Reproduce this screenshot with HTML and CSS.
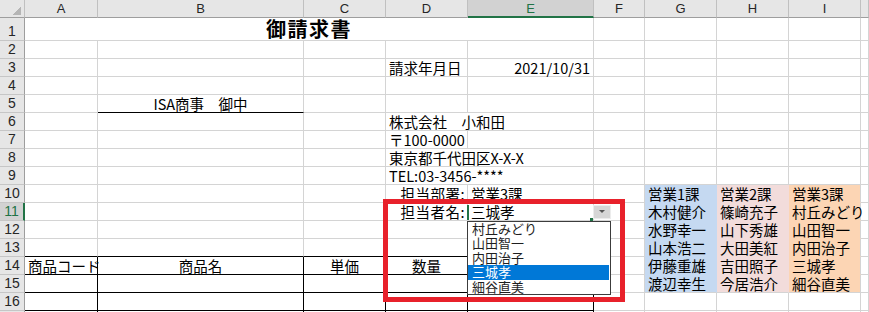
FILE: index.html
```html
<!DOCTYPE html>
<html>
  <head>
    <title>御請求書</title>
    <link rel="stylesheet" href="styles.css">
  </head>
  <body>
    <div class="sheet">
      <table class="grid">
        <colgroup>
          <col class="w-hd"><col class="w-a"><col class="w-b"><col class="w-c"><col class="w-d">
          <col class="w-e"><col class="w-f"><col class="w-g"><col class="w-h"><col class="w-i"><col class="w-j">
        </colgroup>
        <tr class="col-heads">
          <th class="corner"></th><th>A</th><th>B</th><th>C</th><th>D</th>
          <th class="active">E</th><th>F</th><th>G</th><th>H</th><th>I</th><th></th>
        </tr>
        <tr class="title-row">
          <th>1</th><td colspan="5" class="title">御請求書</td><td></td><td></td><td></td><td></td><td></td>
        </tr>
        <tr>
          <th>2</th><td></td><td></td><td></td><td></td><td></td><td></td><td></td><td></td><td></td><td></td>
        </tr>
        <tr>
          <th>3</th><td></td><td></td><td></td><td>請求年月日</td><td class="right">2021/10/31</td>
          <td></td><td></td><td></td><td></td><td></td>
        </tr>
        <tr>
          <th>4</th><td></td><td></td><td></td><td></td><td></td><td></td><td></td><td></td><td></td><td></td>
        </tr>
        <tr>
          <th>5</th><td></td><td class="addressee">ISA商事　御中</td><td></td><td></td><td></td>
          <td></td><td></td><td></td><td></td><td></td>
        </tr>
        <tr>
          <th>6</th><td></td><td></td><td></td><td colspan="2">株式会社　小和田</td>
          <td></td><td></td><td></td><td></td><td></td>
        </tr>
        <tr>
          <th>7</th><td></td><td></td><td></td><td>〒100-0000</td><td></td>
          <td></td><td></td><td></td><td></td><td></td>
        </tr>
        <tr>
          <th>8</th><td></td><td></td><td></td><td colspan="2">東京都千代田区X-X-X</td>
          <td></td><td></td><td></td><td></td><td></td>
        </tr>
        <tr>
          <th>9</th><td></td><td></td><td></td><td colspan="2">TEL:03-3456-****</td>
          <td></td><td></td><td></td><td></td><td></td>
        </tr>
        <tr>
          <th>10</th><td></td><td></td><td></td><td class="right label">担当部署:</td><td>営業3課</td>
          <td></td><td class="blue">営業1課</td><td class="pink">営業2課</td><td class="peach">営業3課</td><td></td>
        </tr>
        <tr class="active">
          <th>11</th><td></td><td></td><td></td><td class="right label">担当者名:</td><td class="selected">三城孝</td>
          <td></td><td class="blue">木村健介</td><td class="pink">篠崎充子</td><td class="peach">村丘みどり</td><td></td>
        </tr>
        <tr>
          <th>12</th><td></td><td></td><td></td><td></td><td></td>
          <td></td><td class="blue">水野幸一</td><td class="pink">山下秀雄</td><td class="peach">山田智一</td><td></td>
        </tr>
        <tr>
          <th>13</th><td class="line-b"></td><td class="line-b"></td><td class="line-b"></td><td class="line-b"></td><td class="line-b"></td>
          <td></td><td class="blue">山本浩二</td><td class="pink">大田美紅</td><td class="peach">内田治子</td><td></td>
        </tr>
        <tr>
          <th>14</th><td class="boxed center">商品コード</td><td class="boxed center">商品名</td><td class="boxed center">単価</td>
          <td class="boxed center">数量</td><td class="boxed center">金額</td>
          <td></td><td class="blue">伊藤重雄</td><td class="pink">吉田照子</td><td class="peach">三城孝</td><td></td>
        </tr>
        <tr>
          <th>15</th><td class="boxed"></td><td class="boxed"></td><td class="boxed"></td><td class="boxed"></td><td class="boxed"></td>
          <td></td><td class="blue last">渡辺幸生</td><td class="pink last">今居浩介</td><td class="peach last">細谷直美</td><td></td>
        </tr>
        <tr>
          <th>16</th><td class="boxed"></td><td class="boxed"></td><td class="boxed"></td><td class="boxed"></td><td class="boxed"></td>
          <td></td><td></td><td></td><td></td><td></td>
        </tr>
        <tr>
          <th></th><td class="boxed"></td><td class="boxed"></td><td class="boxed"></td><td class="boxed"></td><td class="boxed"></td>
          <td></td><td></td><td></td><td></td><td></td>
        </tr>
      </table>

      <!-- validation dropdown on E11 -->
      <div class="dd-button"><span class="dd-arrow"></span></div>
      <ul class="dd-list">
        <li>村丘みどり</li>
        <li>山田智一</li>
        <li>内田治子</li>
        <li class="picked">三城孝</li>
        <li>細谷直美</li>
      </ul>

      <div class="callout"></div>
    </div>
  </body>
</html>
```

FILE: styles.css
```css
* {
  box-sizing: border-box;
}

html,
body {
  margin: 0;
  padding: 0;
  overflow: hidden;
  background-color: #fff;
}

body {
  font-family: "Noto Sans CJK JP", sans-serif;
  color: #000;
}

.sheet {
  position: relative;
  width: 869px;
  height: 312px;
  overflow: hidden;
}

/* Grid */
.grid {
  border-collapse: separate;
  border-spacing: 0;
  table-layout: fixed;
  width: 869px;
}

.w-hd { width: 25px; }
.w-a { width: 73px; }
.w-b { width: 206px; }
.w-c { width: 82px; }
.w-d { width: 82px; }
.w-e { width: 126px; }
.w-f { width: 51px; }
.w-g { width: 72px; }
.w-h { width: 72px; }
.w-i { width: 72px; }
.w-j { width: 8px; }

.grid tr {
  height: 18px;
}

.grid td {
  padding: 0 3px;
  border-right: 1px solid #d4d4d4;
  border-bottom: 1px solid #d4d4d4;
  font-size: 14.5px;
  line-height: 17px;
  white-space: nowrap;
  vertical-align: bottom;
  overflow: visible;
}

/* Headers */
.col-heads {
  height: 15px;
}

.col-heads th {
  padding: 0;
  background-color: #e6e6e6;
  border-right: 1px solid #c0c0c0;
  border-bottom: 1px solid #9e9e9e;
  font: 400 13px/14px "Liberation Sans", sans-serif;
  color: #262626;
  text-align: center;
}

.col-heads th.active {
  background-color: #d2d2d2;
  color: #217346;
  border-bottom: 2px solid #217346;
  line-height: 13px;
}

.col-heads .corner {
  border-right-color: #c0c0c0;
  background: #e6e6e6 no-repeat right 3px bottom 2px / 9px 9px
    linear-gradient(135deg, transparent 50%, #b5b5b5 50%);
}

.grid tr > th:first-child {
  padding: 0;
}

.grid tr:not(.col-heads) > th {
  background-color: #e6e6e6;
  border-right: 1px solid #9e9e9e;
  border-bottom: 1px solid #c6c6c6;
  font: 400 14px/17px "Liberation Sans", sans-serif;
  color: #262626;
  text-align: center;
  vertical-align: bottom;
}

.grid tr.active > th {
  background-color: #d2d2d2;
  color: #217346;
  border-right: 2px solid #217346;
}

/* Cells */
.title-row {
  height: 25px;
}

.grid td.title {
  font-size: 20px;
  font-weight: 700;
  letter-spacing: 1.5px;
  text-align: center;
  line-height: 22px;
}

.right {
  text-align: right;
}

.center {
  text-align: center;
}

.grid td.label {
  padding-right: 2px;
  letter-spacing: 0.5px;
}

.grid td.addressee {
  text-align: center;
  border-bottom-color: #000;
}

.grid td.line-b {
  border-bottom-color: #000;
}

.grid td.boxed {
  border-right-color: #000;
  border-bottom-color: #000;
}

.grid td.selected {
  position: relative;
}

.grid td.selected::before {
  content: "";
  position: absolute;
  left: -1px;
  top: 2px;
  bottom: 0;
  width: 2px;
  background-color: #217346;
}

.grid td.selected::after {
  content: "";
  position: absolute;
  right: 0;
  bottom: -1px;
  width: 3px;
  height: 3px;
  background-color: #217346;
}

/* Section lists */
.grid td.blue {
  background-color: #c5d9f1;
  border-right-color: #c5d9f1;
  border-bottom-color: #c5d9f1;
}

.grid td.pink {
  background-color: #f2dcdb;
  border-right-color: #f2dcdb;
  border-bottom-color: #f2dcdb;
}

.grid td.peach {
  background-color: #fcd5b4;
  border-bottom-color: #fcd5b4;
}

.grid td.last {
  border-bottom-color: #d4d4d4;
}

/* Dropdown */
.dd-button {
  position: absolute;
  left: 593px;
  top: 205px;
  width: 18px;
  height: 14px;
  background-color: #d6d6d6;
  border: 1px solid #ececec;
  display: flex;
  justify-content: center;
  padding-top: 4px;
}

.dd-arrow {
  width: 0;
  height: 0;
  border-left: 3px solid transparent;
  border-right: 3px solid transparent;
  border-top: 3px solid #555;
}

.dd-list {
  position: absolute;
  left: 467px;
  top: 221px;
  width: 144px;
  height: 74px;
  margin: 0;
  padding: 0;
  list-style: none;
  background-color: #fff;
  border: 1px solid #3c3c3c;
}

.dd-list li {
  height: 14.4px;
  margin-right: 1px;
  padding-left: 4px;
  font-size: 13px;
  line-height: 14.4px;
  color: #1e1e1e;
  white-space: nowrap;
}

.dd-list li.picked {
  background-color: #0078d7;
  color: #fff;
}

/* Red annotation box */
.callout {
  position: absolute;
  left: 383px;
  top: 199px;
  width: 242px;
  height: 103px;
  border: 5px solid #e8212b;
}
```
